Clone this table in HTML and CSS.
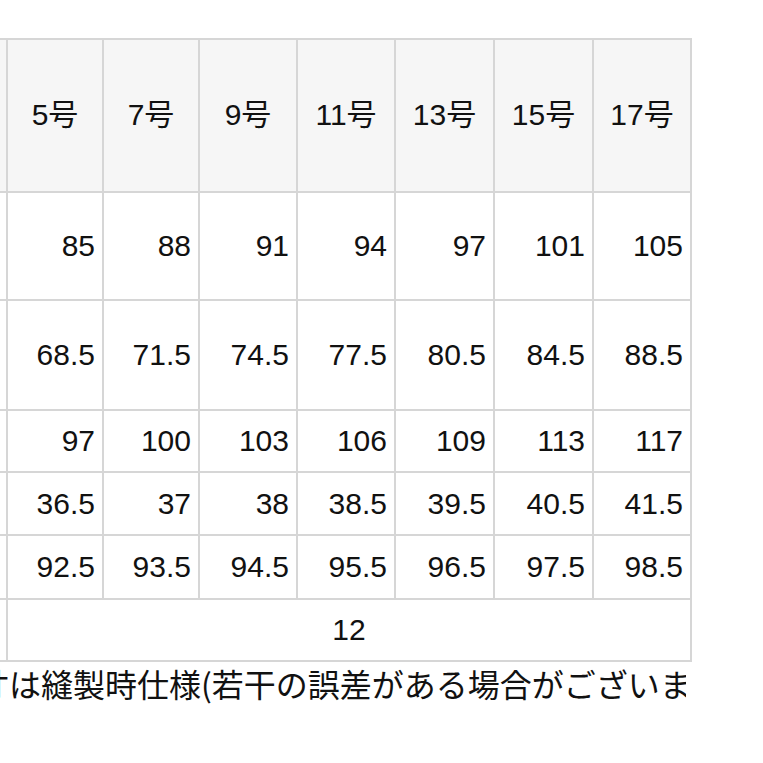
FILE: index.html
```html
<!DOCTYPE html>
<html lang="ja">
<head>
<meta charset="utf-8">
<title>サイズ表</title>
<link rel="stylesheet" href="styles.css">
</head>
<body>
<div class="page">
  <table class="size-table">
    <colgroup>
      <col class="c-label">
      <col class="c-96"><col class="c-96"><col class="c-98"><col class="c-98"><col class="c-99"><col class="c-99"><col class="c-98">
    </colgroup>
    <tr class="r-head">
      <th class="label"></th>
      <th>5号</th><th>7号</th><th>9号</th><th>11号</th><th>13号</th><th>15号</th><th>17号</th>
    </tr>
    <tr class="r-tall">
      <td class="label"></td>
      <td>85</td><td>88</td><td>91</td><td>94</td><td>97</td><td>101</td><td>105</td>
    </tr>
    <tr class="r-tall2">
      <td class="label"></td>
      <td>68.5</td><td>71.5</td><td>74.5</td><td>77.5</td><td>80.5</td><td>84.5</td><td>88.5</td>
    </tr>
    <tr class="r-62">
      <td class="label"></td>
      <td>97</td><td>100</td><td>103</td><td>106</td><td>109</td><td>113</td><td>117</td>
    </tr>
    <tr class="r-63">
      <td class="label"></td>
      <td>36.5</td><td>37</td><td>38</td><td>38.5</td><td>39.5</td><td>40.5</td><td>41.5</td>
    </tr>
    <tr class="r-64">
      <td class="label"></td>
      <td>92.5</td><td>93.5</td><td>94.5</td><td>95.5</td><td>96.5</td><td>97.5</td><td>98.5</td>
    </tr>
    <tr class="r-62">
      <td class="label"></td>
      <td class="span" colspan="7">12</td>
    </tr>
  </table>
  <div class="note-box">
    <p class="note">寸は縫製時仕様(若干の誤差がある場合がございます。)</p>
  </div>
</div>
</body>
</html>
```
FILE: styles.css
```css
html, body {
  margin: 0;
  padding: 0;
  background: #ffffff;
  overflow: hidden;
}
.page {
  width: 763px;
  height: 763px;
  overflow: hidden;
  padding-top: 38px;
  box-sizing: border-box;
  font-family: "Liberation Sans", "Noto Sans CJK JP", sans-serif;
  color: #111111;
}
.size-table {
  border-collapse: collapse;
  table-layout: fixed;
  width: 884px;
  margin-left: -200px;
  font-size: 30px;
}
.c-label { width: 206px; }
.c-96 { width: 96px; }
.c-98 { width: 98px; }
.c-99 { width: 99px; }
.size-table th,
.size-table td {
  border: 2px solid #d6d6d6;
  padding: 0 7px 0 0;
  vertical-align: middle;
  white-space: nowrap;
  overflow: hidden;
}
.size-table th {
  background: #f6f6f6;
  font-weight: normal;
  text-align: center;
  padding: 0 0 8px 0;
}
.size-table td {
  text-align: right;
}
.size-table td.span {
  text-align: center;
  padding: 0;
}
.r-head { height: 153px; }
.r-tall { height: 108px; }
.r-tall2 { height: 110px; }
.r-62 { height: 62px; }
.r-63 { height: 63px; }
.r-64 { height: 64px; }
.note-box {
  width: 686px;
  overflow: hidden;
}
.note {
  margin: 0;
  white-space: nowrap;
  font-family: "Noto Sans CJK JP", sans-serif;
  font-size: 32px;
  line-height: 42px;
  text-indent: -23px;
  color: #111111;
}
```
